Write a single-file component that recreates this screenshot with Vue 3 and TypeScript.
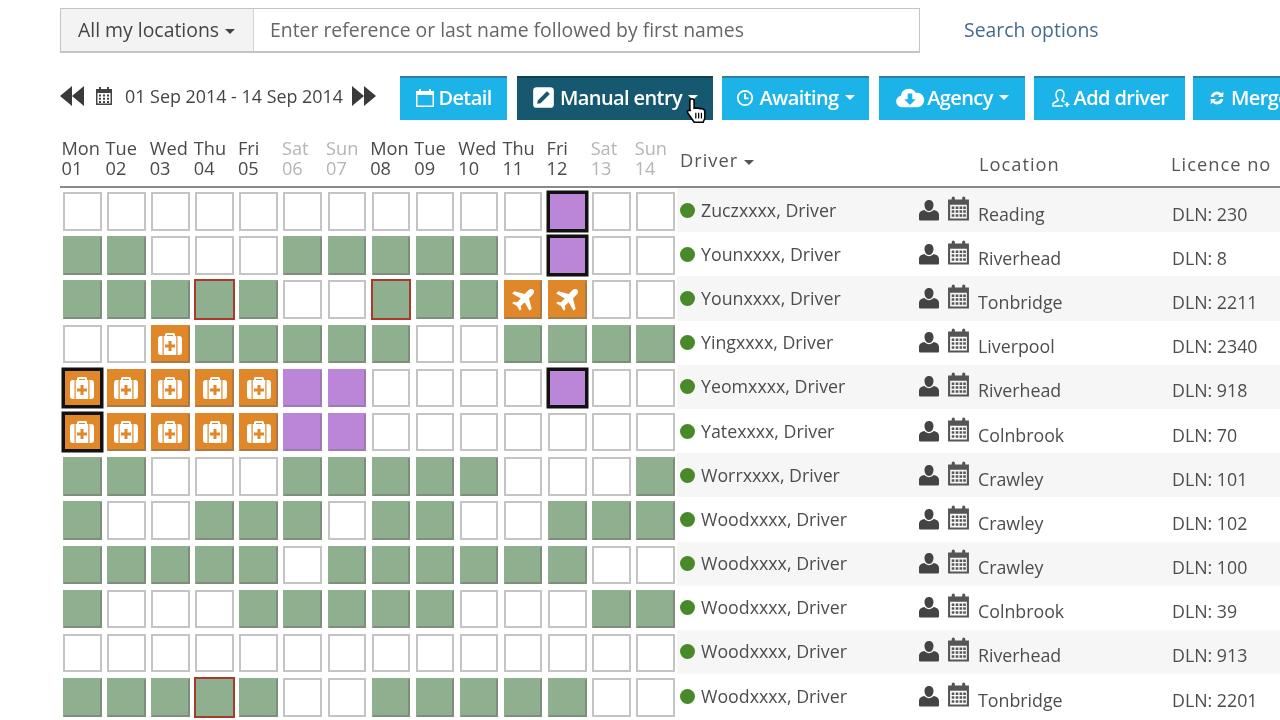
<script setup lang="ts">
interface Day { name: string; num: string; weekend: boolean }
interface Driver { name: string; location: string; dln: string; cells: string }

const days: Day[] = [
  ['Mon', '01'], ['Tue', '02'], ['Wed', '03'], ['Thu', '04'], ['Fri', '05'], ['Sat', '06'], ['Sun', '07'],
  ['Mon', '08'], ['Tue', '09'], ['Wed', '10'], ['Thu', '11'], ['Fri', '12'], ['Sat', '13'], ['Sun', '14'],
].map(([name, num]) => ({ name, num, weekend: name === 'Sat' || name === 'Sun' }))

const drivers: Driver[] = [
  { name: 'Zuczxxxx, Driver', location: 'Reading', dln: 'DLN: 230', cells: 'eeeeeeeeeeePee' },
  { name: 'Younxxxx, Driver', location: 'Riverhead', dln: 'DLN: 8', cells: 'ggeeeggggg' + 'ePee' },
  { name: 'Younxxxx, Driver', location: 'Tonbridge', dln: 'DLN: 2211', cells: 'gggrgeerggaaee' },
  { name: 'Yingxxxx, Driver', location: 'Liverpool', dln: 'DLN: 2340', cells: 'eeoggggg' + 'eegggg' },
  { name: 'Yeomxxxx, Driver', location: 'Riverhead', dln: 'DLN: 918', cells: 'OooooppeeeePee' },
  { name: 'Yatexxxx, Driver', location: 'Colnbrook', dln: 'DLN: 70', cells: 'Oooooppeeeeeee' },
  { name: 'Worrxxxx, Driver', location: 'Crawley', dln: 'DLN: 101', cells: 'ggeeeggggg' + 'eeeg' },
  { name: 'Woodxxxx, Driver', location: 'Crawley', dln: 'DLN: 102', cells: 'geegggeggeeggg' },
  { name: 'Woodxxxx, Driver', location: 'Crawley', dln: 'DLN: 100', cells: 'gggggegggggg' + 'ee' },
  { name: 'Woodxxxx, Driver', location: 'Colnbrook', dln: 'DLN: 39', cells: 'geeegggggeeegg' },
  { name: 'Woodxxxx, Driver', location: 'Riverhead', dln: 'DLN: 913', cells: 'eeeeeeeeeeeeee' },
  { name: 'Woodxxxx, Driver', location: 'Tonbridge', dln: 'DLN: 2201', cells: 'gggrgeeggggg' + 'ee' },
]

function cellClass(c: string): string {
  const map: Record<string, string> = {
    e: 'empty', g: 'green', r: 'green red', p: 'purple', P: 'purple black',
    o: 'orange', O: 'orange black', a: 'orange',
  }
  return map[c]
}
</script>

<template>
  <div class="page">
    <div class="searchbar">
      <div class="search-group">
        <div class="addon">All my locations<span class="caret"></span></div>
        <div class="input">Enter reference or last name followed by first names</div>
      </div>
      <a class="options">Search options</a>
    </div>

    <div class="toolbar">
      <div class="dates">
        <svg class="arrows" viewBox="0 0 24 20"><path d="M12 0v20L0 10zM24 0v20L12 10z" /></svg>
        <svg class="cal-small" viewBox="0 0 18 20">
          <path fill-rule="evenodd" d="M1 3h3V1h2v2h6V1h2v2h3v16H1zM2.500 7v10.500h13V7z" />
          <path d="M4 8.500h2v2H4zM8 8.500h2v2H8zM12 8.500h2v2h-2zM4 11.800h2v2H4zM8 11.800h2v2H8zM12 11.800h2v2h-2zM4 15h2v2H4zM8 15h2v2H8zM12 15h2v2h-2z" />
        </svg>
        <span class="range">01 Sep 2014 - 14 Sep 2014</span>
        <svg class="arrows" viewBox="0 0 24 20"><path d="M0 0v20l12-10zM12 0v20l12-10z" /></svg>
      </div>
      <button class="btn b-detail">
        <svg class="ico" viewBox="0 0 20 20"><path fill-rule="evenodd" d="M1 3h3V1h2v2h8V1h2v2h3v16H1zM2.500 7v10.500h15V7z" /></svg>Detail
      </button>
      <button class="btn dark b-manual">
        <svg class="ico big" viewBox="0 0 20 20"><path fill-rule="evenodd" d="M4 1h12a3 3 0 0 1 3 3v12a3 3 0 0 1-3 3H4a3 3 0 0 1-3-3V4a3 3 0 0 1 3-3zM13 4.500 5 12.500 4.500 15.500 7.500 15 15.500 7z" /></svg>Manual entry<span class="caret"></span>
      </button>
      <button class="btn b-awaiting">
        <svg class="ico small" viewBox="0 0 20 20"><circle cx="10" cy="10" r="8" fill="none" stroke="#fff" stroke-width="2" /><path d="M10 5v5.500h4" fill="none" stroke="#fff" stroke-width="2" /></svg>Awaiting<span class="caret"></span>
      </button>
      <button class="btn b-agency">
        <svg class="ico wide" viewBox="0 0 26 20"><path fill-rule="evenodd" d="M6 18a5 5 0 0 1-1-9.900A7 7 0 0 1 18 5.500a6 6 0 0 1 2 12.500zM11 6v5H8l5 5 5-5h-3V6z" /></svg>Agency<span class="caret"></span>
      </button>
      <button class="btn b-add">
        <svg class="ico" viewBox="0 0 20 20"><path d="M9 2c-3 0-4 2.500-4 5 0 2 1 3.500 2 4.500v1L2 15.500V18h10M9 2c3 0 4 2.500 4 5 0 2-1 3.500-2 4.500v1l2.500 1.500M16 14v5M13.500 16.500h5" fill="none" stroke="#fff" stroke-width="1.500" /></svg>Add driver
      </button>
      <button class="btn b-merge">
        <svg class="ico small" viewBox="0 0 20 20"><path d="M3 9a7 7 0 0 1 12-4l2-2v6h-6l2-2a4.500 4.500 0 0 0-7 2zM17 11a7 7 0 0 1-12 4l-2 2v-6h6l-2 2a4.500 4.500 0 0 0 7-2z" /></svg>Merge
      </button>
    </div>

    <div class="thead">
      <div class="days">
        <div v-for="d in days" :key="d.num" class="day" :class="{ weekend: d.weekend }">
          <span>{{ d.name }}</span><span>{{ d.num }}</span>
        </div>
      </div>
      <div class="th th-driver">Driver<span class="caret"></span></div>
      <div class="th th-location">Location</div>
      <div class="th th-licence">Licence no</div>
    </div>

    <div v-for="(dr, i) in drivers" :key="i" class="row">
      <div class="cells">
        <div class="slot" v-for="(c, j) in dr.cells.split('')" :key="j">
          <div class="cell" :class="cellClass(c)">
            <svg v-if="c === 'o' || c === 'O'" class="med" viewBox="0 0 28 24">
              <path fill-rule="evenodd" d="M9 4V2.500A1.500 1.500 0 0 1 10.500 1h7A1.500 1.500 0 0 1 19 2.500V4h4a3 3 0 0 1 3 3v13a3 3 0 0 1-3 3H5a3 3 0 0 1-3-3V7a3 3 0 0 1 3-3zM11 3v1h6V3zM12.500 9v3.500H9v3h3.500V19h3v-3.500H19v-3h-3.500V9z" />
              <path d="M6.500 4h1.200v19H6.500zM20.300 4h1.200v19h-1.200z" fill="#e08729" />
            </svg>
            <svg v-else-if="c === 'a'" class="plane" viewBox="0 0 24 24">
              <path d="M21.500 2.500c-1.200-1.200-3.200-.8-4.500.5l-3.500 3.500L4 4 2 6l8 4.500L6.500 14l-3-.5L2 15l4.500 2.500L9 22l1.500-1.500-.5-3 3.500-3.500L18 22l2-2-2.500-9.500L21 7c1.300-1.300 1.700-3.300.5-4.500z" />
            </svg>
          </div>
        </div>
      </div>
      <div class="info" :class="{ striped: i % 2 === 0 }">
        <span class="dot"></span>
        <span class="name">{{ dr.name }}</span>
        <svg class="person" viewBox="0 0 20 22"><path d="M10 1c3 0 4.500 2.300 4.500 5S13 12 10 12 5.500 8.700 5.500 6 7 1 10 1zM5.500 11c1.200 1.400 2.800 2.200 4.500 2.200s3.300-.8 4.500-2.200c3 .5 5.500 2 5.500 5v4c0 1-.5 1.500-1.500 1.500h-17C.5 21.500 0 21 0 20v-4c0-3 2.500-4.500 5.500-5z" /></svg>
        <svg class="cal" viewBox="0 0 22 24">
          <path fill-rule="evenodd" d="M1 3h3.500V1.500a1.500 1.500 0 0 1 3 0V3h7V1.500a1.500 1.500 0 0 1 3 0V3H21v20H1zM3 8v13h16V8z" />
          <path d="M4.500 9.500h2.500v2.500H4.500zM8.300 9.500h2.500v2.500H8.300zM12 9.500h2.500v2.500H12zM15.500 9.500H18v2.500h-2.500zM4.500 13.200h2.500v2.500H4.500zM8.300 13.200h2.500v2.500H8.300zM12 13.200h2.500v2.500H12zM15.500 13.200H18v2.500h-2.500zM4.500 17h2.500v2.500H4.500zM8.300 17h2.500v2.500H8.300zM12 17h2.500v2.500H12zM15.500 17H18v2.500h-2.500z" />
        </svg>
        <span class="location">{{ dr.location }}</span>
        <span class="dln">{{ dr.dln }}</span>
      </div>
    </div>

    <svg class="cursor" viewBox="0 0 20 24">
      <path d="M5 1.500c1 0 2 .8 2 2V10l1-.3 1.200.3 1.300-.2 1.500.5 1.500-.1c1.500.2 3 1.200 3 2.800v5c0 2-1 3-1.500 4.500H7L1.500 14.500c-.7-1-.5-2 .3-2.500.8-.5 1.500-.2 2 .5l-.6-1.500V3.500c0-1.200.8-2 1.800-2z" fill="#fff" stroke="#000" stroke-width="1.400" />
      <path d="M8.500 14v5M11 14v5M13.500 14v5" stroke="#000" stroke-width="1.100" fill="none" />
    </svg>
  </div>
</template>

<style>
html, body { margin: 0; background: #fff; }
</style>

<style scoped>
.page {
  position: relative;
  width: 1280px;
  height: 720px;
  overflow: hidden;
  box-sizing: border-box;
  padding: 8px 0 0 60px;
  background: #fff;
  font-family: "Open Sans", "Noto Sans", sans-serif;
  color: #4a4a4a;
  filter: blur(0.3px);
}
.caret {
  display: inline-block;
  width: 0;
  height: 0;
  margin-left: 6px;
  vertical-align: middle;
  border-left: 5px solid transparent;
  border-right: 5px solid transparent;
  border-top: 5px solid currentColor;
}
.searchbar { display: flex; align-items: center; height: 45px; }
.search-group {
  display: flex;
  width: 860px;
  height: 45px;
  box-sizing: border-box;
  border: 1px solid #c4c4c4;
  border-bottom-width: 2px;
}
.addon {
  width: 193px;
  box-sizing: border-box;
  padding-left: 17px;
  background: #f3f3f3;
  border-right: 1px solid #d4d4d4;
  font-size: 19.400px;
  line-height: 42px;
  color: #444;
}
.input { padding-left: 16px; font-size: 19.400px; line-height: 42px; color: #666; }
.options { margin-left: 44px; padding-bottom: 2px; font-size: 19.400px; color: #446b8f; }

.toolbar { display: flex; align-items: center; height: 44px; margin-top: 23px; }
.dates { display: flex; align-items: center; width: 340px; flex: none; padding-bottom: 4px; box-sizing: border-box; }
.arrows { width: 24px; height: 20px; fill: #3a3a3a; flex: none; }
.cal-small { width: 18px; height: 20px; margin-left: 11px; fill: #444; flex: none; }
.range { margin: 0 9px 0 12px; font-size: 17.900px; white-space: nowrap; color: #444; width: 218px; }
.btn {
  display: flex;
  align-items: center;
  justify-content: center;
  flex: none;
  height: 44px;
  margin: 0 10px 0 0;
  padding: 0 0 3px;
  border: 0;
  border-top: 2px solid #2f7f9e;
  background: #1bb3e8;
  color: #fff;
  font: 600 20px "Open Sans", sans-serif;
  letter-spacing: -0.600px;
  white-space: nowrap;
}
.btn.dark { background: #155870; border-top-color: #123f52; }
.b-detail { width: 107px; }
.b-manual { width: 196px; margin-right: 9px; }
.b-awaiting { width: 147px; }
.b-agency { width: 146px; margin-right: 9px; }
.b-add { width: 151px; margin-right: 8px; }
.b-merge { width: 120px; justify-content: flex-start; padding-left: 15px; }
.ico { width: 20px; height: 20px; margin-right: 3px; fill: #fff; flex: none; }
.ico.big { width: 23px; height: 23px; margin-right: 5px; }
.ico.small { width: 18px; height: 18px; margin-right: 5px; }
.ico.wide { width: 30px; height: 24px; margin-right: 2px; }

.thead {
  display: flex;
  height: 68px;
  box-sizing: border-box;
  border-bottom: 2px solid #8a8a8a;
}
.days { display: flex; width: 620px; flex: none; padding-top: 18px; }
.day {
  display: flex;
  flex-direction: column;
  width: 44.100px;
  flex: none;
  padding-left: 1.500px;
  box-sizing: border-box;
  font-size: 18.200px;
  line-height: 20px;
  color: #4a4a4a;
}
.day.weekend { color: #b5b5b5; }
.th { font-size: 18.300px; letter-spacing: 1px; color: #555; white-space: nowrap; }
.th-driver { width: 299px; padding-top: 27px; font-weight: 500; }
.th-location { width: 192px; padding-top: 31px; }
.th-licence { padding-top: 31px; }

.row { display: flex; height: 44.200px; }
.cells { display: flex; width: 617px; box-sizing: border-box; flex: none; padding-left: 3px; }
.slot { width: 44.100px; flex: none; padding-top: 4px; box-sizing: border-box; }
.cell {
  display: flex;
  align-items: center;
  justify-content: center;
  width: 38.500px;
  height: 38.500px;
  box-sizing: border-box;
  border: 2px solid #c4c4c4;
}
.empty { background: #fff; }
.green { background: #8fb08e; border-color: #8fb08e #7e8d7c #7e8d7c #8fb08e; }
.purple { background: #bb86d8; border-color: #bb86d8 #9c7bb0 #9c7bb0 #bb86d8; }
.orange { background: #e08729; border-color: #e08729 #a87a45 #a87a45 #e08729; }
.red { border: 1px solid #a83a2c; box-shadow: 0 0 0 1px #a83a2c; }
.black { border: 2px solid #111; box-shadow: 0 0 0 1.500px #111; }
.med { width: 28px; height: 24px; fill: #fff; }
.plane { width: 26px; height: 26px; fill: #fff; }

.info {
  display: flex;
  align-items: center;
  flex: 1;
  padding-left: 3px;
  white-space: nowrap;
  font-size: 17.800px;
  color: #4d4d4d;
}
.info.striped { background: #f6f6f6; }
.dot { width: 15px; height: 15px; border-radius: 50%; background: #488a2a; flex: none; }
.name { width: 218px; margin-left: 6px; flex: none; padding-bottom: 1px; }
.person { width: 20px; height: 22px; fill: #444; flex: none; margin-bottom: 1px; }
.cal { width: 23px; height: 26px; margin-left: 8px; fill: #555; flex: none; margin-bottom: 3px; }
.location { width: 194px; margin-left: 8px; flex: none; padding-top: 7px; }
.dln { padding-top: 7px; }

.cursor { position: absolute; left: 686px; top: 97px; width: 23px; height: 27px; }
</style>
